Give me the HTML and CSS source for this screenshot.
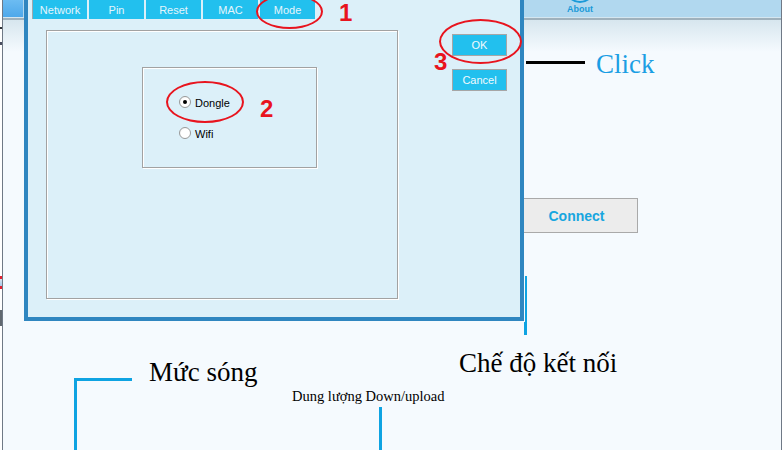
FILE: index.html
```html
<!DOCTYPE html>
<html lang="vi">
<head>
<meta charset="utf-8">
<title>Mode</title>
<link rel="stylesheet" href="styles.css">
</head>
<body>
<div class="screen">
  <div class="edge-left"></div>
  <div class="app">
    <div class="app-header">
      <div class="hdr-left"></div>
      <div class="hdr-main">
        <div class="about">
          <svg class="about-icon" width="32" height="4" viewBox="0 0 32 4"><circle cx="16" cy="-12" r="14" fill="none" stroke="#1a9ad8" stroke-width="2"/></svg>
          <span class="about-text">About</span>
        </div>
      </div>
    </div>
    <div class="app-rule"></div>
    <div class="app-body">
      <div class="connect">Connect</div>
    </div>
  </div>
  <div class="edge-right"></div>
</div>

<div class="dialog">
  <div class="tabs">
    <div class="tab tab-first">Network</div>
    <div class="tab">Pin</div>
    <div class="tab">Reset</div>
    <div class="tab">MAC</div>
    <div class="tab">Mode</div>
  </div>
  <div class="dlg-body">
    <div class="group">
      <div class="radio-box">
        <div class="radio-row"><span class="radio radio-on"></span><span class="radio-label">Dongle</span></div>
        <div class="radio-row"><span class="radio"></span><span class="radio-label">Wifi</span></div>
      </div>
    </div>
    <div class="dlg-buttons">
      <div class="btn">OK</div>
      <div class="btn">Cancel</div>
    </div>
  </div>
</div>

<div class="ring ring-mode"></div>
<div class="ring ring-dongle"></div>
<div class="ring ring-ok"></div>
<div class="num num-1">1</div>
<div class="num num-2">2</div>
<div class="num num-3">3</div>

<div class="black-line"></div>
<div class="note note-click">Click</div>

<div class="bline bline-thin"></div>
<div class="bline bline-thick"></div>
<div class="note note-mode">Chế độ kết nối</div>

<div class="bline bline-wave-h"></div>
<div class="bline bline-wave-v"></div>
<div class="note note-wave">Mức sóng</div>

<div class="bline bline-data"></div>
<div class="note note-data">Dung lượng Down/upload</div>
</body>
</html>
```

FILE: styles.css
```css
* { box-sizing: border-box; }

body {
  margin: 0;
  width: 783px;
  height: 450px;
  overflow: hidden;
  position: relative;
  background: #ffffff;
  font-family: "Liberation Sans", Arial, sans-serif;
}

.screen {
  display: flex;
  height: 450px;
}

.edge-left {
  width: 2px;
  background:
    linear-gradient(to bottom,
      #ffffff 0, #ffffff 27px, #30343a 27px, #30343a 29px, #ffffff 29px,
      #ffffff 42px, #4a4e60 42px, #4a4e60 45px, #ffffff 45px,
      #ffffff 276px, #e02030 276px, #e02030 279px, #d8e4ee 279px,
      #a8c8e8 286px, #e02030 286px, #e02030 289px, #ffffff 289px,
      #ffffff 310px, #606870 310px, #606870 326px, #ffffff 326px);
}

.edge-right {
  width: 1px;
  background: #ffffff;
}

.app {
  flex: 1;
  display: flex;
  flex-direction: column;
  border-left: 1px solid #6f7986;
  border-right: 1px solid #6f7986;
  background: #f5fafe;
}

.app-header {
  display: flex;
  height: 18px;
  border-bottom: 1px solid #d4e6f0;
}

.hdr-left {
  width: 20px;
  background: linear-gradient(to bottom, #6cbcf2, #4ea8ea);
}

.hdr-main {
  flex: 1;
  display: flex;
  background: #b1d8ef;
}

.about {
  margin-left: 541px;
  width: 32px;
  display: flex;
  flex-direction: column;
  align-items: center;
}

.about-icon { display: block; }

.about-text {
  font-size: 9px;
  font-weight: bold;
  line-height: 9px;
  color: #1a9ad8;
  margin-top: 1px;
}

.app-rule {
  height: 2px;
  background: #9fb1bc;
}

.app-body {
  flex: 1;
  background: linear-gradient(to bottom, #d7e6ee 0, #f5fafe 32px, #f5fafe 100%);
  padding-top: 178px;
  padding-left: 512px;
}

.connect {
  width: 123px;
  height: 35px;
  border: 1px solid #a9a9a9;
  background: #ececec;
  color: #18a6df;
  font-size: 14px;
  font-weight: bold;
  display: flex;
  align-items: center;
  justify-content: center;
  padding-left: 0;
}

/* dialog window */
.dialog {
  position: absolute;
  left: 24px;
  top: -4px;
  width: 500px;
  height: 325px;
  border: 4px solid #2f86c0;
  background: #dcf0f9;
}

.tabs {
  display: flex;
  gap: 2px;
  padding-left: 4px;
  height: 19px;
}

.tab {
  width: 55px;
  height: 19px;
  background: #22c0ee;
  color: #e4f5fc;
  font-size: 11px;
  display: flex;
  align-items: center;
  justify-content: center;
  padding-top: 1px;
}

.tab-first {
  border-left: 1px solid #a0a8ac;
}

.dlg-body {
  display: flex;
  align-items: flex-start;
  margin-top: 11px;
  padding-left: 18px;
}

.group {
  width: 352px;
  height: 269px;
  border: 1px solid #a2a2a2;
  box-shadow: 1px 1px 0 #ffffff, inset 1px 1px 0 #ffffff;
  padding-top: 36px;
  padding-left: 95px;
}

.radio-box {
  width: 175px;
  height: 101px;
  border: 1px solid #a2a2a2;
  box-shadow: 1px 1px 0 #ffffff, inset 1px 1px 0 #ffffff;
  padding-top: 28px;
  padding-left: 36px;
}

.radio-row {
  display: flex;
  align-items: center;
  gap: 4px;
  height: 12px;
  margin-bottom: 19px;
}

.radio {
  width: 12px;
  height: 12px;
  border-radius: 50%;
  border: 1px solid #9a9a9a;
  background: radial-gradient(circle at 60% 60%, #ffffff 0, #ffffff 55%, #e6e6e6 100%);
  display: flex;
  align-items: center;
  justify-content: center;
}

.radio-on::after {
  content: "";
  width: 4px;
  height: 4px;
  border-radius: 50%;
  background: #000000;
}

.radio-label {
  font-size: 11px;
  color: #000000;
  line-height: 12px;
  padding-top: 1px;
}

.dlg-buttons {
  display: flex;
  flex-direction: column;
  gap: 13px;
  margin-left: 54px;
  margin-top: 4px;
}

.btn {
  width: 55px;
  height: 22px;
  border: 1px solid #a6a6a6;
  background: #22c0ee;
  color: #f2fafd;
  font-size: 11px;
  display: flex;
  align-items: center;
  justify-content: center;
}

/* annotations */
.ring {
  position: absolute;
  border: 2.5px solid #e8141e;
  border-radius: 50%;
}

.ring-mode { left: 256px; top: -6px; width: 67px; height: 35px; }
.ring-dongle { left: 166px; top: 81px; width: 78px; height: 42px; }
.ring-ok { left: 439px; top: 19px; width: 83px; height: 45px; }

.num {
  position: absolute;
  font-family: "Liberation Sans", Arial, sans-serif;
  font-weight: bold;
  font-size: 24px;
  line-height: 1;
  color: #e8141e;
}

.num-1 { left: 339px; top: 1px; }
.num-2 { left: 260px; top: 97px; }
.num-3 { left: 434px; top: 50px; }

.black-line {
  position: absolute;
  left: 526px;
  top: 61px;
  width: 59px;
  height: 3px;
  background: #000000;
}

.note {
  position: absolute;
  font-family: "Liberation Serif", "Times New Roman", serif;
  font-size: 27px;
  line-height: 1;
  color: #000000;
  white-space: nowrap;
}

.note-click { left: 596px; top: 51px; color: #1b9ee4; }
.note-mode { left: 459px; top: 350px; }
.note-wave { left: 149px; top: 359px; }
.note-data { left: 292px; top: 389px; font-size: 14.5px; }

.bline {
  position: absolute;
  background: #0ea3e2;
}

.bline-thin { left: 525px; top: 276px; width: 2px; height: 46px; }
.bline-thick { left: 524px; top: 322px; width: 3px; height: 13px; }
.bline-wave-h { left: 74px; top: 378px; width: 58px; height: 3px; }
.bline-wave-v { left: 74px; top: 378px; width: 3px; height: 72px; }
.bline-data { left: 379px; top: 407px; width: 3px; height: 43px; }
```
